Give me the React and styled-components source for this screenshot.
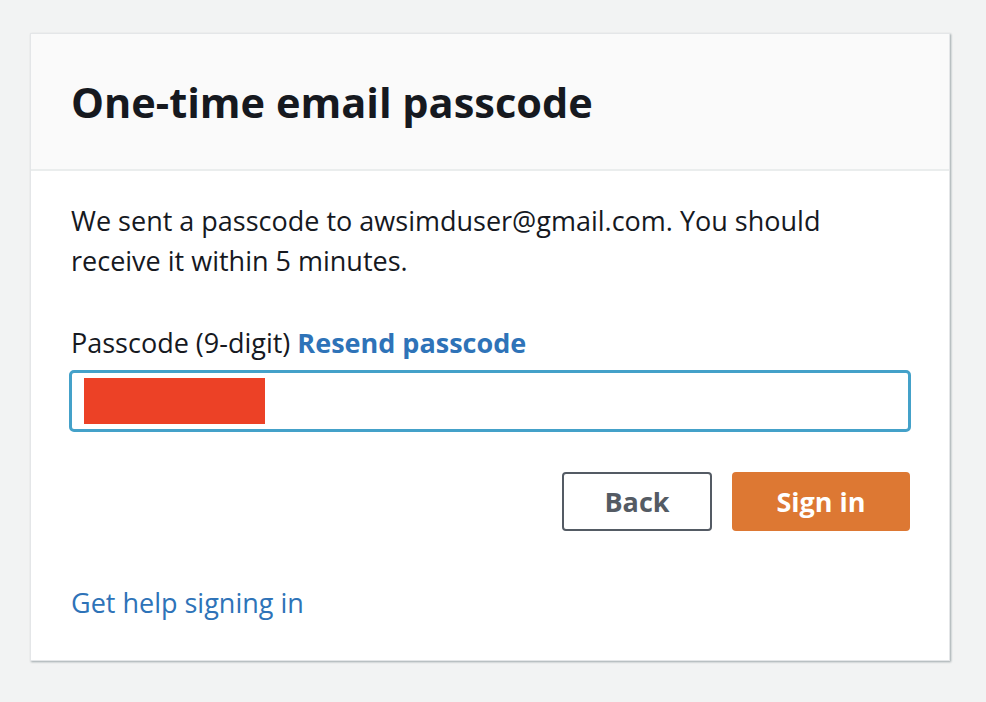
import React from 'react';
import styled, {createGlobalStyle} from 'styled-components';

const GlobalStyle = createGlobalStyle`
  html, body {
    margin: 0;
    padding: 0;
    background: #f2f3f3;
    font-family: "Open Sans", "Noto Sans", "Liberation Sans", sans-serif;
  }
`
const Page = styled.div`
  width: 986px;
  height: 702px;
  padding: 33px 0 0 30px;
  box-sizing: border-box;
`
const Card = styled.div`
  width: 920px;
  background: #ffffff;
  border: 1px solid #e4e6e8;
  box-shadow: 1px 1px 2px rgba(0, 28, 36, 0.35);
  box-sizing: border-box;
`
const Header = styled.div`
  height: 137px;
  background: #fafafa;
  border-bottom: 2px solid #eaeded;
  display: flex;
  align-items: center;
  padding: 0 40px;
  box-sizing: border-box;
`
const Title = styled.h1`
  margin: 0;
  font-size: 41.5px;
  font-weight: 700;
  color: #16191f;
`
const Body = styled.div`
  padding: 30px 40px 37px 40px;
  display: flex;
  flex-direction: column;
`
const Text = styled.p`
  margin: 0;
  font-size: 27px;
  line-height: 40px;
  color: #16191f;
`
const Label = styled.div`
  margin-top: 42px;
  font-size: 27px;
  line-height: 40px;
  color: #16191f;
`
const Link = styled.a`
  color: #2e73b8;
  font-weight: ${p => (p.bold ? 700 : 400)};
  text-decoration: none;
  cursor: pointer;
`
const Input = styled.div`
  margin: 7px -2px 0 -2px;
  height: 62px;
  border: 3px solid #44a1c9;
  border-radius: 5px;
  box-sizing: border-box;
  display: flex;
  align-items: center;
  padding: 0 12px;
`
const Redacted = styled.div`
  width: 181px;
  height: 46px;
  background: #ec4126;
`
const Actions = styled.div`
  margin: 40px -1px 0 0;
  display: flex;
  justify-content: flex-end;
  gap: 20px;
`
const Button = styled.button`
  height: 59px;
  width: ${p => p.w}px;
  border-radius: 4px;
  font-family: inherit;
  font-size: 27px;
  font-weight: 700;
  box-sizing: border-box;
  cursor: pointer;
  background: ${p => (p.primary ? '#dd7833' : '#ffffff')};
  color: ${p => (p.primary ? '#ffffff' : '#545b64')};
  border: ${p => (p.primary ? 'none' : '2px solid #545b64')};
`
const Footer = styled.div`
  margin-top: 52px;
  font-size: 27px;
  line-height: 40px;
`

export default function App() {
  return (
    <>
      <GlobalStyle />
      <Page>
        <Card>
          <Header>
            <Title>One-time email passcode</Title>
          </Header>
          <Body>
            <Text>
              We sent a passcode to awsimduser@gmail.com. You should receive it within 5 minutes.
            </Text>
            <Label>
              Passcode (9-digit) <Link bold>Resend passcode</Link>
            </Label>
            <Input>
              <Redacted />
            </Input>
            <Actions>
              <Button w={150}>Back</Button>
              <Button w={178} primary>Sign in</Button>
            </Actions>
            <Footer>
              <Link>Get help signing in</Link>
            </Footer>
          </Body>
        </Card>
      </Page>
    </>
  )
}
